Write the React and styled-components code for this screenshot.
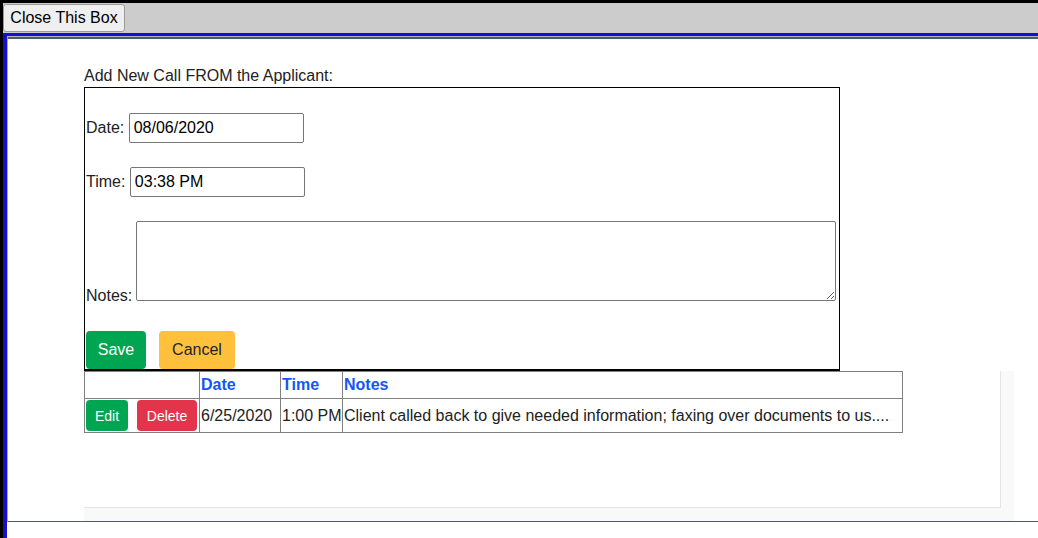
import React from 'react';
import styled, { createGlobalStyle } from 'styled-components';

const GlobalStyle = createGlobalStyle`
  html, body {
    margin: 0;
    padding: 0;
    background: #fff;
    font-family: "Liberation Sans", Helvetica, Arial, sans-serif;
    font-size: 16px;
    color: #212529;
  }
  * { box-sizing: border-box; }
`;

const Frame = styled.div`
  min-height: 100vh;
  border-top: 3px solid #000;
  border-left: 3px solid #000;
  display: flex;
  flex-direction: column;
`;

const TopBar = styled.div`
  height: 30px;
  background: #cccccc;
  padding-top: 1px;
`;

const CloseButton = styled.button`
  width: 122px;
  height: 28px;
  padding: 0;
  font-family: inherit;
  font-size: 16px;
  color: #000;
  background: #efefef;
  border: 1px solid #9a9a9a;
  border-radius: 3px;
`;

const Body = styled.div`
  flex: 1;
  border-top: 3px solid #1810c8;
  border-left: 4px solid #1810c8;
`;

const Edge = styled.div`
  height: 100%;
  border-top: 1px solid #b4b8bc;
  border-left: 1px solid #a9a9a9;
`;

const Panel = styled.div`
  height: 485px;
  border-top: 2px solid #4d5b67;
  border-bottom: 1px solid #4d5b67;
  padding: 28px 0 0 76px;
`;

const Heading = styled.div`
  height: 18px;
  line-height: 18px;
  margin-bottom: 2px;
  color: #222;
`;

const CallForm = styled.form`
  width: 756px;
  border: 1px solid #000;
  border-bottom-width: 2px;
  padding: 25px 0 0 1px;
  color: #222;
`;

const Row = styled.div`
  margin-bottom: ${p => p.$gap}px;
  line-height: 18px;
`;

const NotesRow = styled.div`
  display: flex;
  align-items: flex-end;
  gap: 4px;
  margin-bottom: 30px;
  line-height: 16px;
`;

const NotesLabel = styled.span`
  margin-bottom: -3px;
`;

const TextInput = styled.input`
  width: 175px;
  height: 30px;
  padding: 1px 4px;
  font-family: inherit;
  font-size: 16px;
  color: #000;
  border: 1px solid #767676;
  border-radius: 2px;
  vertical-align: baseline;
`;

const Notes = styled.textarea`
  width: 700px;
  height: 80px;
  margin: 0;
  border: 1px solid #767676;
  border-radius: 2px;
  font-family: inherit;
  font-size: 14px;
`;

const Buttons = styled.div`
  display: flex;
  gap: 13px;
`;

const Btn = styled.button`
  width: ${p => p.$w}px;
  height: ${p => p.$h}px;
  padding: 0;
  font-family: inherit;
  font-size: ${p => p.$size}px;
  color: ${p => p.$fg || '#fff'};
  background: ${p => p.$bg};
  border: none;
  border-radius: 4px;
`;

const Well = styled.div`
  width: 930px;
  height: 150px;
  background: #f9f9f9;
  padding: 0 13px 13px 0;
`;

const Card = styled.div`
  height: 100%;
  background: #fff;
  border-right: 1px solid #e4e4e4;
  border-bottom: 1px solid #e4e4e4;
`;

const Table = styled.table`
  border-collapse: collapse;
  table-layout: fixed;
  width: 819px;
  white-space: nowrap;
  color: #222;
`;

const Th = styled.th`
  border: 1px solid #808080;
  padding: 4px 1px;
  text-align: left;
  font-weight: bold;
  color: #1257f5;
  line-height: 18px;
`;

const Td = styled.td`
  border: 1px solid #808080;
  padding: 1px;
  line-height: 18px;
  overflow: hidden;
`;

const Actions = styled.div`
  display: flex;
  gap: 9px;
`;

const GREEN = '#00a551';
const RED = '#e2344a';
const YELLOW = '#ffc13b';

const calls = [
  {
    id: 1,
    date: '6/25/2020',
    time: '1:00 PM',
    notes: 'Client called back to give needed information; faxing over documents to us....',
  },
];

export default function App() {
  return (
    <>
      <GlobalStyle />
      <Frame>
        <TopBar>
          <CloseButton type="button">Close This Box</CloseButton>
        </TopBar>
        <Body>
          <Edge>
            <Panel>
              <Heading>Add New Call FROM the Applicant:</Heading>
              <CallForm onSubmit={e => e.preventDefault()}>
                <Row $gap={24}>
                  Date: <TextInput defaultValue="08/06/2020" />
                </Row>
                <Row $gap={24}>
                  Time: <TextInput defaultValue="03:38 PM" />
                </Row>
                <NotesRow>
                  <NotesLabel>Notes:</NotesLabel>
                  <Notes />
                </NotesRow>
                <Buttons>
                  <Btn type="submit" $w={60} $h={38} $size={16} $bg={GREEN}>Save</Btn>
                  <Btn type="button" $w={76} $h={38} $size={16} $bg={YELLOW} $fg="#212529">Cancel</Btn>
                </Buttons>
              </CallForm>
              <Well>
                <Card>
                  <Table>
                    <colgroup>
                      <col style={{ width: 115 }} />
                      <col style={{ width: 81 }} />
                      <col style={{ width: 62 }} />
                      <col />
                    </colgroup>
                    <thead>
                      <tr>
                        <Th></Th>
                        <Th>Date</Th>
                        <Th>Time</Th>
                        <Th>Notes</Th>
                      </tr>
                    </thead>
                    <tbody>
                      {calls.map(call => (
                        <tr key={call.id}>
                          <Td>
                            <Actions>
                              <Btn type="button" $w={42} $h={31} $size={14} $bg={GREEN}>Edit</Btn>
                              <Btn type="button" $w={60} $h={31} $size={14} $bg={RED}>Delete</Btn>
                            </Actions>
                          </Td>
                          <Td>{call.date}</Td>
                          <Td>{call.time}</Td>
                          <Td>{call.notes}</Td>
                        </tr>
                      ))}
                    </tbody>
                  </Table>
                </Card>
              </Well>
            </Panel>
          </Edge>
        </Body>
      </Frame>
    </>
  );
}
